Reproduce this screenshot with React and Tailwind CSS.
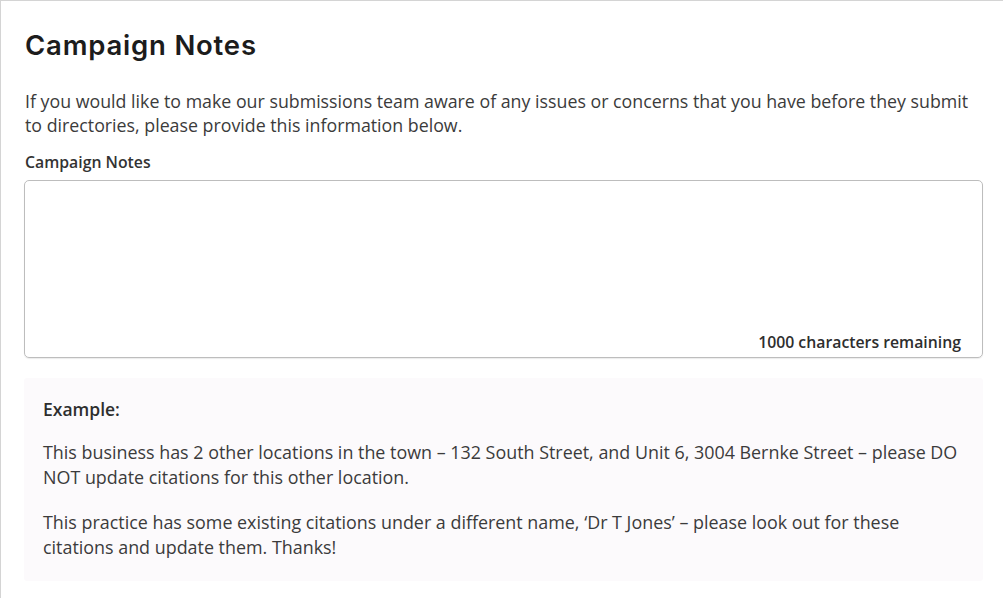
export default function App() {
  return (
    <div className="w-[1003px] h-[598px] bg-white border-t border-l border-[#d4d4d4] overflow-hidden" style={{ fontFamily: '"Open Sans", sans-serif' }}>
      <div className="pl-[23px] pr-[20px] pt-[26px]">
        <h1 className="text-[27.5px] leading-[36px] font-semibold text-[#1c1c1c] tracking-[0.8px] pl-[1px]" style={{ fontFamily: 'Inter, sans-serif' }}>
          Campaign Notes
        </h1>
        <p className="mt-[26px] pl-[1px] text-[17.8px] leading-[24px] text-[#3b3b3b]">
          If you would like to make our submissions team aware of any issues or concerns that you have before they submit to directories, please provide this information below.
        </p>
        <div className="mt-[15px] pl-[1px] text-[15.8px] leading-[20px] font-semibold text-[#333]">Campaign Notes</div>
        <div className="mt-[8px] h-[178px] w-[959px] rounded-[5px] border border-[#bdbdbd] shadow-[0_1px_1px_rgba(0,0,0,0.08)] flex flex-col justify-end items-end px-[21px] pb-[5px]">
          <span className="text-[15.8px] leading-[20px] font-semibold text-[#2e2e2e]">1000 characters remaining</span>
        </div>
        <div className="mt-[20px] w-[959px] h-[203px] bg-[#fcfafc] rounded-[3px] pl-[19px] pr-[12px] pt-[20px] text-[#3b3b3b]">
          <div className="text-[17.5px] leading-[22px] font-semibold text-[#2e2e2e]">Example:</div>
          <p className="mt-[20px] text-[17.9px] leading-[25px]">
            This business has 2 other locations in the town – 132 South Street, and Unit 6, 3004 Bernke Street – please DO NOT update citations for this other location.
          </p>
          <p className="mt-[20px] text-[17.9px] leading-[25px]">
            This practice has some existing citations under a different name, ‘Dr T Jones’ – please look out for these citations and update them. Thanks!
          </p>
        </div>
      </div>
    </div>
  );
}
